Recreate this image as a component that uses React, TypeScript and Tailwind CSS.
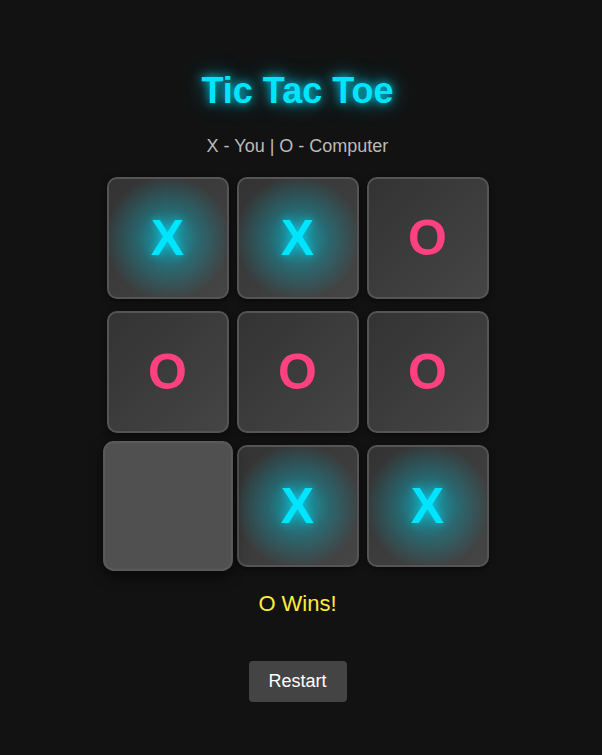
import React from 'react';

type Mark = 'X' | 'O' | null;

const BOARD: Mark[] = ['X', 'X', 'O', 'O', 'O', 'O', null, 'X', 'X'];

const Cell: React.FC<{ mark: Mark; hovered?: boolean }> = ({ mark, hovered }) => {
  if (hovered) {
    return (
      <div className="w-[122px] h-[122px] rounded-[10px] border-2 border-[#5a5a5a] bg-[#505050] scale-[1.065] shadow-[0_4px_12px_rgba(0,0,0,0.6)]" />
    );
  }
  return (
    <div className="w-[122px] h-[122px] rounded-[10px] border-2 border-[#555] bg-gradient-to-br from-[#333333] to-[#454545] shadow-[0_2px_6px_rgba(0,0,0,0.5)] overflow-hidden">
      <div
        className={
          mark === 'X'
            ? 'w-full h-full flex items-center justify-center bg-radial from-[rgba(0,210,235,0.7)] from-0% via-[rgba(0,195,220,0.32)] via-35% to-transparent to-75%'
            : 'w-full h-full flex items-center justify-center'
        }
      >
        {mark === 'X' && (
          <span className="text-[50px] font-bold leading-none text-[#00e5ff] [text-shadow:0_0_8px_rgba(0,229,255,0.6)]">
            X
          </span>
        )}
        {mark === 'O' && (
          <span className="text-[50px] font-bold leading-none text-[#ff4081]">O</span>
        )}
      </div>
    </div>
  );
};

export default function App() {
  return (
    <div className="min-h-[755px] bg-[#121212] font-['Liberation_Sans',Arial,sans-serif] flex flex-col items-center pr-[7px]">
      <h1 className="mt-[71px] text-[36px] font-bold leading-[40px] text-[#00e5ff] [text-shadow:0_0_10px_rgba(0,229,255,0.9),0_0_22px_rgba(0,229,255,0.6)]">
        Tic Tac Toe
      </h1>
      <p className="mt-[25px] text-[18px] leading-[20px] text-[#bbbbbb]">X - You | O - Computer</p>
      <div className="mt-[21px] grid grid-cols-[repeat(3,122px)] gap-x-[8px] gap-y-[12px]">
        {BOARD.map((m, i) => (
          <Cell key={i} mark={m} hovered={i === 6} />
        ))}
      </div>
      <div className="mt-[24px] text-[22px] leading-[26px] text-[#ffeb3b]">O Wins!</div>
      <button className="mt-[44px] w-[98px] h-[41px] rounded-[4px] bg-[#444] text-white text-[18px]">
        Restart
      </button>
    </div>
  );
}
